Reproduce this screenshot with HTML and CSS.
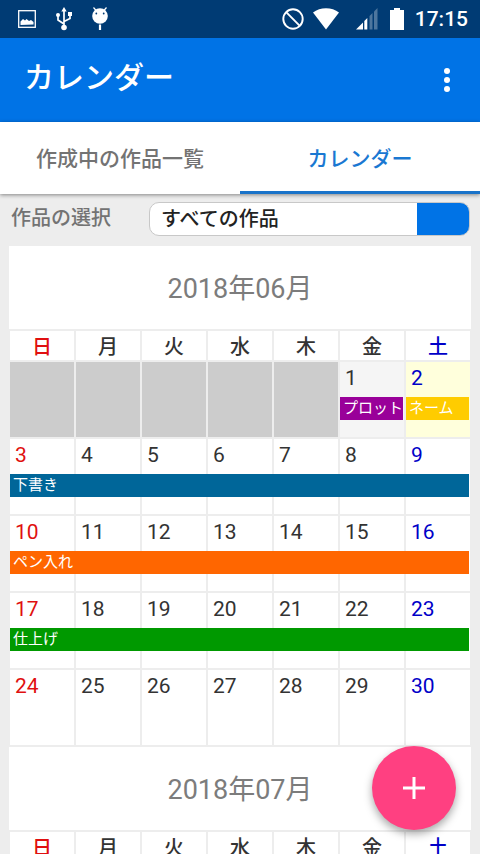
FILE: index.html
```html
<!DOCTYPE html>
<html lang="ja">
<head>
<meta charset="utf-8">
<meta name="viewport" content="width=device-width, initial-scale=1">
<title>カレンダー</title>
<link rel="stylesheet" href="styles.css">
</head>
<body>
<div class="status-bar">
  <div class="status-left">
    <svg width="18" height="24" viewBox="0 0 18 24">
      <rect x="0.7" y="3.7" width="16.6" height="16.6" fill="none" stroke="#fff" stroke-width="1.3"/>
      <path d="M2.5 18V14.500L5 12l2 1.500 1.500-1.500 2.500 2 2-1 2.500 2v2.500z" fill="#fff"/>
    </svg>
    <svg width="16" height="24" viewBox="0 0 16 24">
      <path d="M8 20V3M8 17L2 13V8M8 14.500l6-3V7" fill="none" stroke="#fff" stroke-width="1.700"/>
      <path d="M8 0l2.700 4.500H5.300z" fill="#fff"/>
      <circle cx="8" cy="20.500" r="2.800" fill="#fff"/>
      <circle cx="2" cy="8" r="2" fill="#fff"/>
      <rect x="12" y="5" width="4" height="4" fill="#fff"/>
    </svg>
    <svg width="16" height="24" viewBox="0 0 16 24">
      <path d="M1.500 0.500l3 3.500M14.500 0.500l-3 3.500" stroke="#fff" stroke-width="1.200"/>
      <circle cx="8" cy="9" r="7.800" fill="#fff"/>
      <circle cx="4.300" cy="6.500" r="0.900" fill="#003b74"/>
      <circle cx="11.700" cy="6.500" r="0.900" fill="#003b74"/>
      <path d="M8 17.500v5.500" stroke="#fff" stroke-width="2.200"/>
    </svg>
  </div>
  <div class="status-right">
    <svg width="22" height="22" viewBox="0 0 22 22">
      <circle cx="11" cy="11" r="9.700" fill="none" stroke="#fff" stroke-width="1.900"/>
      <path d="M4.200 4.200l13.600 13.600" stroke="#fff" stroke-width="1.900"/>
    </svg>
    <svg class="wifi" width="26" height="22" viewBox="0 0 26 22">
      <path d="M0 4.500C7-1.300 19-1.300 26 4.500L13 21.500z" fill="#fff"/>
    </svg>
    <svg class="signal" width="22" height="22" viewBox="0 0 22 22">
      <path d="M13.500 8v13.500h3V5z" fill="#fff" fill-opacity="0.3"/>
      <path d="M18 3.500v18h3.500V0z" fill="#fff" fill-opacity="0.3"/>
      <path d="M0 21.500L7 14.500v7z" fill="#fff"/>
      <path d="M8.300 13v8.500h3V10z" fill="#fff"/>
    </svg>
    <svg class="battery" width="14" height="22" viewBox="0 0 14 22">
      <path d="M4 0h6v2h4v20H0V2h4z" fill="#fff"/>
    </svg>
    <span class="clock">17:15</span>
  </div>
</div>

<header class="app-bar">
  <h1>カレンダー</h1>
  <button class="menu-button" type="button" aria-label="メニュー">
    <svg width="6" height="24" viewBox="0 0 6 24" fill="#fff">
      <circle cx="3" cy="3" r="3"/>
      <circle cx="3" cy="12" r="3"/>
      <circle cx="3" cy="21" r="3"/>
    </svg>
  </button>
</header>

<nav class="tabs">
  <a href="#works">作成中の作品一覧</a>
  <a href="#calendar" class="active">カレンダー</a>
</nav>

<main id="calendar">
  <div class="filter">
    <label for="work">作品の選択</label>
    <select id="work">
      <option>すべての作品</option>
    </select>
  </div>

  <section class="month">
    <h2>2018年06月</h2>
    <table>
      <thead>
        <tr><th class="sun">日</th><th>月</th><th>火</th><th>水</th><th>木</th><th>金</th><th class="sat">土</th></tr>
      </thead>
      <tbody>
        <tr>
          <td class="blank"></td>
          <td class="blank"></td>
          <td class="blank"></td>
          <td class="blank"></td>
          <td class="blank"></td>
          <td class="past"><span class="day">1</span><div class="event plot">プロット</div></td>
          <td class="sat today"><span class="day">2</span><div class="event name">ネーム</div></td>
        </tr>
        <tr>
          <td class="sun"><span class="day">3</span><div class="event week draft">下書き</div></td>
          <td><span class="day">4</span></td>
          <td><span class="day">5</span></td>
          <td><span class="day">6</span></td>
          <td><span class="day">7</span></td>
          <td><span class="day">8</span></td>
          <td class="sat"><span class="day">9</span></td>
        </tr>
        <tr>
          <td class="sun"><span class="day">10</span><div class="event week ink">ペン入れ</div></td>
          <td><span class="day">11</span></td>
          <td><span class="day">12</span></td>
          <td><span class="day">13</span></td>
          <td><span class="day">14</span></td>
          <td><span class="day">15</span></td>
          <td class="sat"><span class="day">16</span></td>
        </tr>
        <tr>
          <td class="sun"><span class="day">17</span><div class="event week finish">仕上げ</div></td>
          <td><span class="day">18</span></td>
          <td><span class="day">19</span></td>
          <td><span class="day">20</span></td>
          <td><span class="day">21</span></td>
          <td><span class="day">22</span></td>
          <td class="sat"><span class="day">23</span></td>
        </tr>
        <tr>
          <td class="sun"><span class="day">24</span></td>
          <td><span class="day">25</span></td>
          <td><span class="day">26</span></td>
          <td><span class="day">27</span></td>
          <td><span class="day">28</span></td>
          <td><span class="day">29</span></td>
          <td class="sat"><span class="day">30</span></td>
        </tr>
      </tbody>
    </table>
  </section>

  <section class="month">
    <h2>2018年07月</h2>
    <table>
      <thead>
        <tr><th class="sun">日</th><th>月</th><th>火</th><th>水</th><th>木</th><th>金</th><th class="sat">土</th></tr>
      </thead>
    </table>
  </section>
</main>

<button class="fab" type="button" aria-label="追加">
  <svg width="22" height="22" viewBox="0 0 22 22">
    <path d="M11 0v22M0 11h22" stroke="#fff" stroke-width="3"/>
  </svg>
</button>
</body>
</html>
```

FILE: styles.css
```css
* {
  box-sizing: border-box;
}

body {
  margin: 0;
  height: 100vh;
  display: flex;
  flex-direction: column;
  overflow: hidden;
  background-color: #ededed;
  color: #333;
  font-family: Roboto, "Noto Sans CJK JP", sans-serif;
}

svg {
  display: block;
}

/* status bar */
.status-bar {
  flex: none;
  height: 38px;
  padding: 0 12px 0 18px;
  display: flex;
  justify-content: space-between;
  align-items: center;
  background-color: #003b74;
  color: #fff;
}

.status-left,
.status-right {
  display: flex;
  align-items: center;
}

.status-left {
  gap: 20px;
}

.wifi {
  margin-left: 9px;
}

.signal {
  margin-left: 17px;
}

.battery {
  margin-left: 12px;
}

.clock {
  margin-left: 11px;
  font-size: 21px;
  font-weight: 500;
  line-height: 38px;
}

/* app bar */
.app-bar {
  flex: none;
  height: 84px;
  padding: 0 20px 0 24px;
  display: flex;
  justify-content: space-between;
  align-items: center;
  background-color: #0073e6;
}

h1 {
  margin: 0;
  padding-bottom: 4px;
  color: #fff;
  font-size: 30px;
  font-weight: 500;
  line-height: 40px;
}

.menu-button {
  padding: 10px;
  border: none;
  background: none;
  cursor: pointer;
}

/* tabs */
.tabs {
  flex: none;
  display: flex;
  position: relative;
  background-color: #fff;
  box-shadow: 0 1px 4px rgba(0, 0, 0, 0.45);
}

.tabs a {
  flex: 1;
  height: 72px;
  border-bottom: 3px solid transparent;
  color: #737373;
  font-size: 21px;
  font-weight: 500;
  line-height: 74px;
  text-align: center;
  text-decoration: none;
}

.tabs .active {
  border-color: #1a73c9;
  color: #1a78d2;
}

main {
  flex: 1;
  min-height: 0;
  padding: 8px 8px 0;
  overflow: hidden;
}

/* work filter */
.filter {
  display: flex;
  align-items: center;
  margin-bottom: 10px;
  padding: 0 2px 0 3px;
}

.filter label {
  width: 138px;
  color: #737373;
  font-size: 20px;
  font-weight: 500;
  line-height: 30px;
  padding-bottom: 2px;
}

.filter select {
  flex: 1;
  height: 34px;
  padding: 0 60px 0 11px;
  border: 1px solid #c8c8c8;
  border-radius: 10px;
  appearance: none;
  background: linear-gradient(#0073e6, #0073e6) right / 52px 100% no-repeat #fff;
  color: #222;
  font-family: inherit;
  font-size: 20px;
  font-weight: 500;
}

/* month */
h2 {
  margin: 0 1px;
  height: 83px;
  background-color: #fff;
  color: #7c7c7c;
  font-size: 27px;
  font-weight: 400;
  line-height: 87px;
  text-align: center;
}

table {
  width: 100%;
  table-layout: fixed;
  border-collapse: separate;
  border-spacing: 2px;
}

th {
  height: 29px;
  padding: 4px 0 0;
  background-color: #fff;
  font-size: 20px;
  font-weight: 500;
  line-height: 25px;
}

td {
  height: 75px;
  padding: 0;
  background-color: #fff;
  font-size: 21px;
  vertical-align: top;
}

.sun {
  color: #e01010;
}

.sat {
  color: #0000c8;
}

.blank {
  background-color: #ccc;
}

.past {
  background-color: #f5f5f5;
}

.today {
  background-color: #ffffdc;
}

.day {
  display: block;
  padding-left: 5px;
  line-height: 33px;
}

/* event bars, drawn over the cells they span */
.event {
  --days: 1;
  position: relative;
  z-index: 1;
  width: calc(var(--days) * (100% + 2px) - 3px);
  height: 23px;
  margin-top: 2px;
  padding-left: 3px;
  color: #fff;
  font-size: 15px;
  line-height: 22px;
  white-space: nowrap;
}

.week {
  --days: 7;
}

.plot {
  background-color: #909;
}

.name {
  background-color: #fc0;
}

.draft {
  background-color: #069;
}

.ink {
  background-color: #f60;
}

.finish {
  background-color: #090;
}

/* add button */
.fab {
  position: fixed;
  right: 24px;
  bottom: 24px;
  z-index: 2;
  width: 84px;
  height: 84px;
  display: flex;
  justify-content: center;
  align-items: center;
  padding: 0;
  border: none;
  border-radius: 50%;
  background-color: #ff4081;
  box-shadow: 0 4px 8px rgba(0, 0, 0, 0.35);
  cursor: pointer;
}
```
